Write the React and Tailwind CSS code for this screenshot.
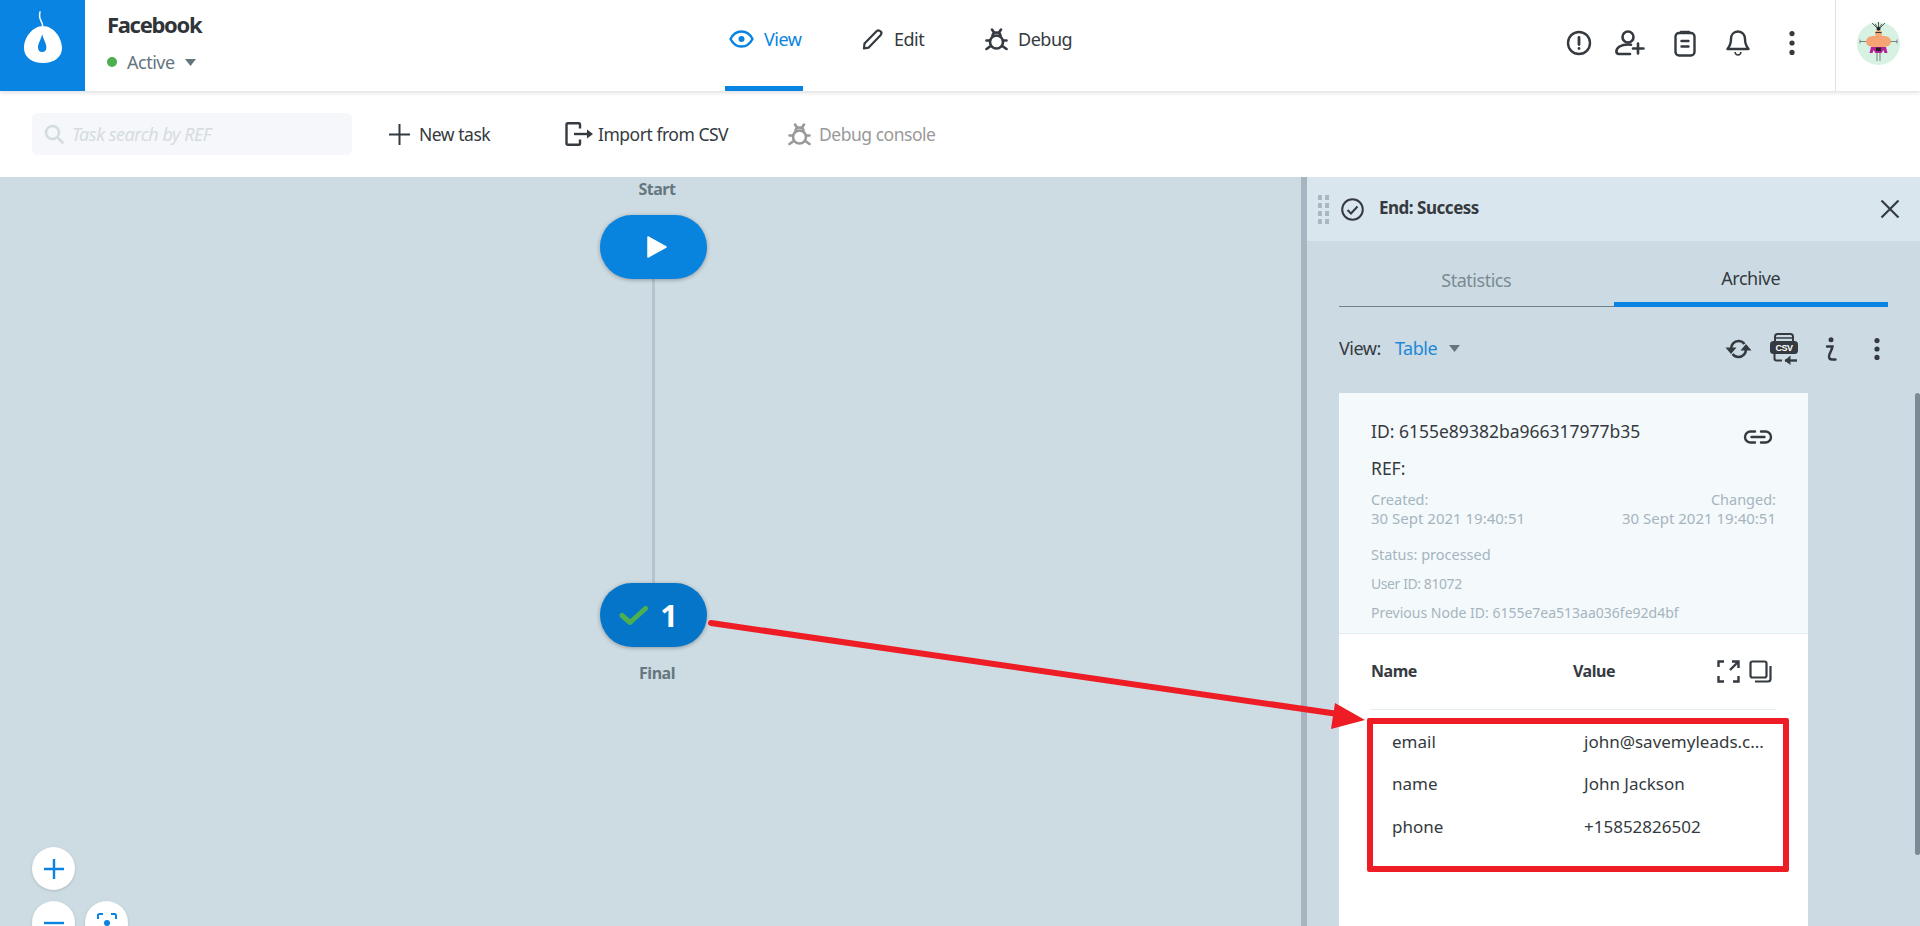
const Dark = "#343a40";

function Logo() {
  return (
    <svg width="85" height="91" viewBox="0 0 85 91" fill="none">
      <path d="M40 12c-1.500 5 .5 8 1.800 10.500 1.300 2.500 1.500 5 .2 11" stroke="#fff" strokeWidth="1.500" strokeLinecap="round" />
      <path fillRule="evenodd" clipRule="evenodd" d="M43 26c-10 0-19 11-19 22 0 9 8 15 19 15s19-6 19-15c0-11-9-22-19-22Zm-.8 8c-.8 5-4.200 9-4.200 13.500 0 3 1.800 4.500 4.200 4.500s4.200-1.500 4.200-4.500c0-4.500-3.400-8.500-4.200-13.500Z" fill="#fff" />
      <path d="M42 33c.5 3 2 6 3 8.500" stroke="#0984e3" strokeWidth="0" />
    </svg>
  );
}

function Eye() {
  return (
    <svg width="25" height="18" viewBox="0 0 25 18" fill="none" stroke="#0984e3" strokeWidth="2.400">
      <path d="M1.500 9C4 4 8 1.500 12.500 1.500S21 4 23.500 9C21 14 17 16.500 12.500 16.500S4 14 1.500 9Z" />
      <circle cx="12.500" cy="9" r="3" fill="#0984e3" stroke="none" />
    </svg>
  );
}

function Pencil() {
  return (
    <svg width="21" height="21" viewBox="0 0 21 21" fill="none" stroke={Dark} strokeWidth="2.200" strokeLinejoin="round">
      <path d="M2 19.500l.5-5L14.500 2.200c1.200-1.100 2.900-1 4 .2 1.100 1.100 1.100 2.800 0 3.900L6.500 18.700Z" />
    </svg>
  );
}

function Bug({ color = Dark }) {
  return (
    <svg width="23" height="23" viewBox="0 0 23 23" fill="none" stroke={color} strokeWidth="2.600" strokeLinecap="round">
      <circle cx="11.500" cy="14" r="6.500" />
      <path d="M7.500 8c0-2 1.500-3.500 4-3.500s4 1.500 4 3.500" />
      <path d="M7 1.500l2 3M16 1.500l-2 3M1.500 12.500h3.500M18 12.500h3.500M1.500 21l3.500-2.500M21.500 21L18 18.500" />
    </svg>
  );
}

function Alert() {
  return (
    <svg width="26" height="26" viewBox="0 0 26 26" fill="none" stroke={Dark} strokeWidth="2.400" strokeLinecap="round">
      <circle cx="13" cy="13" r="11" />
      <path d="M13 7.500v7" strokeWidth="2.800" />
      <circle cx="13" cy="18.500" r="1.400" fill={Dark} stroke="none" />
    </svg>
  );
}

function UserPlus() {
  return (
    <svg width="30" height="26" viewBox="0 0 30 26" fill="none" stroke={Dark} strokeWidth="2.600" strokeLinecap="round">
      <circle cx="13" cy="7" r="5.500" />
      <path d="M15 24H4c-1.800 0-2.600-1.200-2.600-2.400C1.400 17.500 6 14.500 13 14.500c1 0 2 0 3 .2" />
      <path d="M23 13.500v10M18 18.500h10.500" />
    </svg>
  );
}

function Clipboard() {
  return (
    <svg width="22" height="27" viewBox="0 0 22 27" fill="none" stroke={Dark} strokeWidth="2.400" strokeLinecap="round">
      <rect x="1.500" y="3" width="19" height="22.500" rx="3.500" />
      <path d="M7 2h8" strokeWidth="2.600" />
      <path d="M7.500 11h7M7.500 16.500h7" />
    </svg>
  );
}

function Bell() {
  return (
    <svg width="24" height="27" viewBox="0 0 24 27" fill="none" stroke={Dark} strokeWidth="2.400" strokeLinejoin="round">
      <path d="M12 1.500c-4.500 0-7 3.500-7 7.500 0 5-1.500 7.500-3.500 10h21C20.500 16.500 19 14 19 9c0-4-2.500-7.500-7-7.500Z" />
      <path d="M9 22c.3 2 1.400 3 3 3s2.700-1 3-3" strokeWidth="1.600" />
    </svg>
  );
}

function Dots({ h = 22, r = 2.600 }) {
  return (
    <svg width="8" height={h} viewBox={`0 0 8 ${h}`} fill={Dark}>
      <circle cx="4" cy={r} r={r} />
      <circle cx="4" cy={h / 2} r={r} />
      <circle cx="4" cy={h - r} r={r} />
    </svg>
  );
}

function Avatar() {
  return (
    <svg width="43" height="43" viewBox="0 0 43 43">
      <circle cx="21.500" cy="21.500" r="21.500" fill="#d7f1e2" />
      <path d="M15 1l5 5M28 1l-5 5M21.500 0v6M18 2l3 4M25 2l-3 4" stroke="#333" strokeWidth=".8" />
      <circle cx="21.500" cy="7" r="2" fill="#222" />
      <path d="M3 19.500h37M3 17.500v4M40 17.500v4M20 31v8M23 31v8" stroke="#666" strokeWidth=".8" fill="none" />
      <rect x="18" y="8.500" width="7" height="6" rx="2.500" fill="#f3a878" />
      <path d="M18.500 10.500h6" stroke="#333" strokeWidth="1" />
      <path d="M17 14c-5 0-8 2-8 5.500s3 5 7 5.500h11c4-.5 7-2 7-5.500S31 14 26 14Z" fill="#f5a473" />
      <path d="M14 25h15l1.500 6h-3l-1-3-2 3h-6l-2-3-1 3h-3Z" fill="#b4219b" />
      <rect x="19" y="25.500" width="5" height="3.500" fill="#222" />
    </svg>
  );
}

function Tab({ width, children, active }) {
  return (
    <div className={`flex items-center h-full pb-[8px] ${width} border-b-[5px] ${active ? "border-[#0984e3] text-[#0984e3]" : "border-transparent text-[#343a40]"}`}>
      {children}
    </div>
  );
}

function Sync() {
  return (
    <svg width="27" height="24" viewBox="0 0 27 24" fill="none" stroke={Dark} strokeWidth="2.600">
      <path d="M6 12C6 7.500 9 4 13.500 4c2.500 0 4.500 1 6 3" />
      <path d="M21 12c0 4.500-3 8-7.500 8-2.500 0-4.500-1-6-3" />
      <path d="M0.500 10.500h11L6 17ZM15.500 13.500h11L21 7Z" fill={Dark} stroke="none" />
    </svg>
  );
}

function Csv() {
  return (
    <svg width="30" height="32" viewBox="0 0 30 32">
      <path d="M6 9V3.500C6 2 7 1 8.500 1h13C23 1 24 2 24 3.500V9" fill="none" stroke={Dark} strokeWidth="2" />
      <path d="M6 5h18" stroke={Dark} strokeWidth="1.500" />
      <rect x="1" y="8" width="28" height="13" rx="3.500" fill={Dark} />
      <text x="15" y="18" textAnchor="middle" fontSize="9" fontWeight="700" fill="#fff" fontFamily="Liberation Sans, sans-serif">CSV</text>
      <path d="M5.500 21v4.500c0 1.200.8 2 2 2H13" fill="none" stroke={Dark} strokeWidth="2" />
      <path d="M16 27.500h12" stroke={Dark} strokeWidth="2.400" />
      <path d="M21.500 22.500l-6 5 6 4.500Z" fill={Dark} />
    </svg>
  );
}

function Info() {
  return (
    <svg width="12" height="24" viewBox="0 0 12 24" fill="none" stroke={Dark} strokeWidth="2.400" strokeLinecap="round">
      <circle cx="6" cy="2.700" r="2.500" fill={Dark} stroke="none" />
      <path d="M2 9.500h5.500c-.5 4-3.500 7-3.500 10 0 2 1.500 3 3 3h3.500" />
    </svg>
  );
}

function LinkIcon() {
  return (
    <svg width="30" height="14" viewBox="0 0 30 14" fill="none" stroke={Dark} strokeWidth="2.400" strokeLinecap="round">
      <path d="M12 1.500H7.500a5.500 5.500 0 0 0 0 11H12M18 1.500h4.500a5.500 5.500 0 0 1 0 11H18M8.500 7h13" />
    </svg>
  );
}

function Expand() {
  return (
    <svg width="23" height="23" viewBox="0 0 23 23" fill="none" stroke={Dark} strokeWidth="2.400">
      <path d="M1.500 7V1.500H7M1.500 16v5.500H7M16 21.500h5.500V16M21.500 8V1.500H15M21 2l-8 8" />
    </svg>
  );
}

function CopyIcon() {
  return (
    <svg width="23" height="23" viewBox="0 0 23 23" fill="none" stroke={Dark} strokeWidth="2.200">
      <rect x="1.500" y="1.500" width="16" height="16" rx="2" />
      <path d="M21.500 6v13c0 1.500-1 2.500-2.500 2.500H6" />
    </svg>
  );
}

function Caret({ color = "#65757e" }) {
  return (
    <svg width="11" height="7" viewBox="0 0 11 7"><path d="M0 0h11L5.500 7Z" fill={color} /></svg>
  );
}

function Node({ className, children }) {
  return (
    <div className={`absolute left-[600px] w-[107px] h-[64px] rounded-[32px] shadow-[0_1px_4px_rgba(0,0,0,0.3)] flex items-center justify-center ${className}`}>
      {children}
    </div>
  );
}

function Circle({ className, children }) {
  return (
    <div className={`absolute w-[43px] h-[43px] rounded-full bg-white shadow-[0_1px_3px_rgba(0,0,0,0.15)] flex items-center justify-center ${className}`}>
      {children}
    </div>
  );
}

function Row({ name, value }) {
  return (
    <div className="flex h-[42.500px] items-center pl-[53px] text-[17px] tracking-normal text-[#343a40]">
      <div className="w-[192px]">{name}</div>
      <div className="whitespace-nowrap">{value}</div>
    </div>
  );
}

export default function App() {
  return (
    <div className="relative w-[1920px] h-[926px] overflow-hidden bg-white font-['Noto_Sans',sans-serif] tracking-[-0.03em] text-[#343a40] flex flex-col">
      <header className="relative z-10 h-[91px] shrink-0 flex bg-white shadow-[0_2px_4px_rgba(0,0,0,0.12)]">
        <div className="w-[85px] bg-[#0984e3]"><Logo /></div>
        <div className="w-[618px] ml-[22px] flex flex-col">
          <div className="mt-[6px] text-[22px] tracking-[-0.06em] leading-[36px] font-bold text-[#2f3438]">Facebook</div>
          <div className="mt-[7px] flex items-center text-[18px] leading-[26px] text-[#65757e]">
            <span className="w-[10px] h-[10px] rounded-full bg-[#4caf50] mr-[10px]" />
            <span className="w-[58px]">Active</span>
            <Caret />
          </div>
        </div>
        <div className="flex items-stretch text-[18px]">
          <Tab width="w-[78px]" active>
            <span className="ml-[4px] mr-[10px] flex"><Eye /></span>View
          </Tab>
          <div className="ml-[59px]">
            <Tab width="w-[64px]"><span className="mr-[11px] flex"><Pencil /></span>Edit</Tab>
          </div>
          <div className="ml-[59px]">
            <Tab width="w-[100px]"><span className="mr-[10px] flex"><Bug /></span>Debug</Tab>
          </div>
        </div>
        <div className="ml-auto flex items-center pb-[5px] pr-[39px]">
          <Alert />
          <span className="ml-[23px] flex"><UserPlus /></span>
          <span className="ml-[29px] flex"><Clipboard /></span>
          <span className="ml-[30px] flex"><Bell /></span>
          <span className="ml-[38px] flex"><Dots h={24} /></span>
        </div>
        <div className="w-[85px] border-l border-[#dde3e6] flex items-center justify-center pb-[5px]"><Avatar /></div>
      </header>

      <div className="h-[86px] shrink-0 flex items-center pl-[32px] bg-white text-[17.500px]">
        <div className="w-[320px] h-[42px] rounded-[6px] bg-[#f5f7fa] flex items-center pl-[12px]">
          <svg width="20" height="20" viewBox="0 0 20 20" fill="none" stroke="#d3dcdf" strokeWidth="2.600" strokeLinecap="round">
            <circle cx="8.500" cy="8.500" r="6.500" /><path d="M13.500 13.500l5 5" />
          </svg>
          <span className="ml-[8px] text-[18px] italic text-[#d5dce0]">Task search by REF</span>
        </div>
        <div className="ml-[37px] w-[176px] flex items-center">
          <svg width="21" height="21" viewBox="0 0 21 21" stroke={Dark} strokeWidth="2"><path d="M10.500 0v21M0 10.500h21" /></svg>
          <span className="ml-[9px]">New task</span>
        </div>
        <div className="w-[223px] flex items-center">
          <svg width="28" height="24" viewBox="0 0 28 24" fill="none" stroke={Dark} strokeWidth="2.400">
            <path d="M15 6.500V2.500c0-.8-.6-1.300-1.300-1.300H3c-.8 0-1.500.6-1.500 1.500v18.600c0 .9.700 1.500 1.500 1.500h10.700c.7 0 1.300-.5 1.300-1.300v-4" />
            <path d="M9 12h14" /><path d="M22 7.500l6 4.500-6 4.500Z" fill={Dark} stroke="none" />
          </svg>
          <span className="ml-[5px]">Import from CSV</span>
        </div>
        <div className="flex items-center text-[#999]">
          <Bug color="#999" /><span className="ml-[8px]">Debug console</span>
        </div>
      </div>

      <main className="flex-1 min-h-0 flex bg-[#cddbe2]">
        <div className="relative flex-1">
          <div className="absolute left-[557px] w-[200px] top-[3px] text-center text-[16px] font-bold leading-[18px] text-[#65777f]">Start</div>
          <div className="absolute left-[652px] top-[100px] w-[3px] h-[310px] bg-[#b5c5ce]" />
          <Node className="top-[38px] bg-[#0984de]">
            <svg className="ml-[6px]" width="20" height="22" viewBox="0 0 20 22"><path d="M1 1l18 10L1 21Z" fill="#fff" stroke="#fff" strokeWidth="1.500" strokeLinejoin="round" /></svg>
          </Node>
          <Node className="top-[406px] bg-[#0575c9]">
            <svg width="29" height="21" viewBox="0 0 29 21" fill="none" className="mr-[12px]">
              <path d="M3 10.500l8 7L26.500 3.500" stroke="#4caf50" strokeWidth="5" strokeLinecap="round" strokeLinejoin="round" />
            </svg>
            <span className="mr-[10px] text-[31px] font-bold leading-none text-white">1</span>
          </Node>
          <div className="absolute left-[557px] w-[200px] top-[487px] text-center text-[16px] font-bold leading-[18px] text-[#65777f]">Final</div>
          <Circle className="left-[32px] top-[670px]">
            <svg width="20" height="20" viewBox="0 0 20 20" stroke="#0984e3" strokeWidth="2.400"><path d="M10 0v20M0 10h20" /></svg>
          </Circle>
          <Circle className="left-[32px] top-[724px]">
            <svg width="20" height="20" viewBox="0 0 20 20" stroke="#0984e3" strokeWidth="2.400"><path d="M0 10h20" /></svg>
          </Circle>
          <Circle className="left-[85px] top-[724px]">
            <svg width="20" height="20" viewBox="0 0 20 20" fill="none" stroke="#0984e3" strokeWidth="2">
              <path d="M1 6V2.500C1 1.500 1.500 1 2.500 1H6M14 1h3.500c1 0 1.500.5 1.500 1.500V6M19 14v3.500c0 1-.5 1.500-1.500 1.500H14M6 19H2.500C1.500 19 1 18.500 1 17.500V14" />
              <circle cx="10" cy="10" r="3" fill="#0984e3" stroke="none" />
            </svg>
          </Circle>
        </div>

        <aside className="relative w-[619px] shrink-0 bg-[#ccdbe3] border-l-[6px] border-[#a6b5bf] flex flex-col">
          <div className="h-[64px] shrink-0 bg-[#dae6ee] flex items-center pl-[11px] pr-[20px]">
            <div className="grid grid-cols-2 gap-x-[3px] gap-y-[3px] w-[11px] mr-[12px]">
              {Array.from({ length: 8 }).map((_, i) => (
                <span key={i} className="w-[4px] h-[5px] bg-[#a9b8c0]" />
              ))}
            </div>
            <svg width="23" height="23" viewBox="0 0 23 23" fill="none" stroke={Dark} strokeWidth="2">
              <circle cx="11.500" cy="11.500" r="10.300" /><path d="M6.500 12l3.500 3.500L16.500 8.500" />
            </svg>
            <span className="ml-[15px] mb-[2px] text-[17px] font-bold">End: Success</span>
            <svg className="ml-auto" width="20" height="20" viewBox="0 0 20 20" stroke={Dark} strokeWidth="2.200"><path d="M1.500 1.500l17 17M18.500 1.500l-17 17" /></svg>
          </div>

          <div className="mx-[32px] w-[549px] grid grid-cols-2 h-[66px] shrink-0 text-[18px] text-center">
            <div className="border-b-[1.500px] border-[#6f8089] text-[#7b8a92] flex items-center justify-center pt-[13px]">Statistics</div>
            <div className="border-b-[5px] border-[#0984e3] flex items-center justify-center pt-[13px]">Archive</div>
          </div>

          <div className="h-[86px] shrink-0 ml-[32px] w-[549px] flex items-center text-[18px] pb-[3px]">
            <span className="w-[56px]">View:</span>
            <span className="w-[54px] text-[#1e88d8]">Table</span>
            <Caret />
            <div className="ml-[265px] flex items-center">
              <Sync />
              <span className="ml-[17px] flex"><Csv /></span>
              <span className="ml-[26px] flex"><Info /></span>
              <span className="ml-[36px] flex"><Dots /></span>
            </div>
          </div>

          <section className="ml-[32px] w-[469px] flex-1 min-h-0 bg-white">
            <div className="h-[241px] bg-[#f4f9fc] border-b border-[#e2ecf1] pt-[25px] pl-[32px] pr-[32px] tracking-normal">
              <div className="flex items-center justify-between text-[17.500px] leading-[24px]">
                <span>ID: 6155e89382ba966317977b35</span>
                <span className="mt-[12px] mr-[3px] flex"><LinkIcon /></span>
              </div>
              <div className="mt-[12px] text-[17.500px] leading-[24px]">REF:</div>
              <div className="mt-[10px] flex justify-between text-[15px] leading-[19px] text-[#a5b5be]">
                <div><span className="text-[14.500px]">Created:</span><br />30 Sept 2021 19:40:51</div>
                <div className="text-right"><span className="text-[14.500px]">Changed:</span><br />30 Sept 2021 19:40:51</div>
              </div>
              <div className="mt-[17px] text-[14.500px] leading-[19px] text-[#a5b5be]">Status: processed</div>
              <div className="mt-[10px] text-[14px] tracking-[-0.03em] leading-[19px] text-[#a5b5be]">User ID: 81072</div>
              <div className="mt-[10px] text-[14px] leading-[19px] text-[#a5b5be]">Previous Node ID: 6155e7ea513aa036fe92d4bf</div>
            </div>
            <div className="h-[76px] mx-[32px] border-b border-[#e2ecf1] flex items-center text-[16px] font-bold pb-[1px]">
              <span className="w-[202px]">Name</span>
              <span className="w-[144px]">Value</span>
              <span className="flex"><Expand /></span>
              <span className="ml-[9px] flex"><CopyIcon /></span>
            </div>
            <div className="pt-[10px]">
              <Row name="email" value="john@savemyleads.c..." />
              <Row name="name" value="John Jackson" />
              <Row name="phone" value="+15852826502" />
            </div>
          </section>

          <div className="absolute right-0 top-[216px] w-[5px] h-[462px] rounded-full bg-[#7b8b95]" />
        </aside>
      </main>

      <svg className="absolute left-0 top-0 z-20 pointer-events-none" width="1920" height="926" viewBox="0 0 1920 926" fill="none">
        <path d="M711 623L1345 715" stroke="#ee1c25" strokeWidth="6" strokeLinecap="round" />
        <path d="M1335 703L1365 720L1331 729Z" fill="#ee1c25" />
      </svg>
      <div className="absolute z-20 left-[1367px] top-[718px] w-[422px] h-[154px] border-[6px] border-[#ee1c25] rounded-[2px] pointer-events-none" />
    </div>
  );
}
